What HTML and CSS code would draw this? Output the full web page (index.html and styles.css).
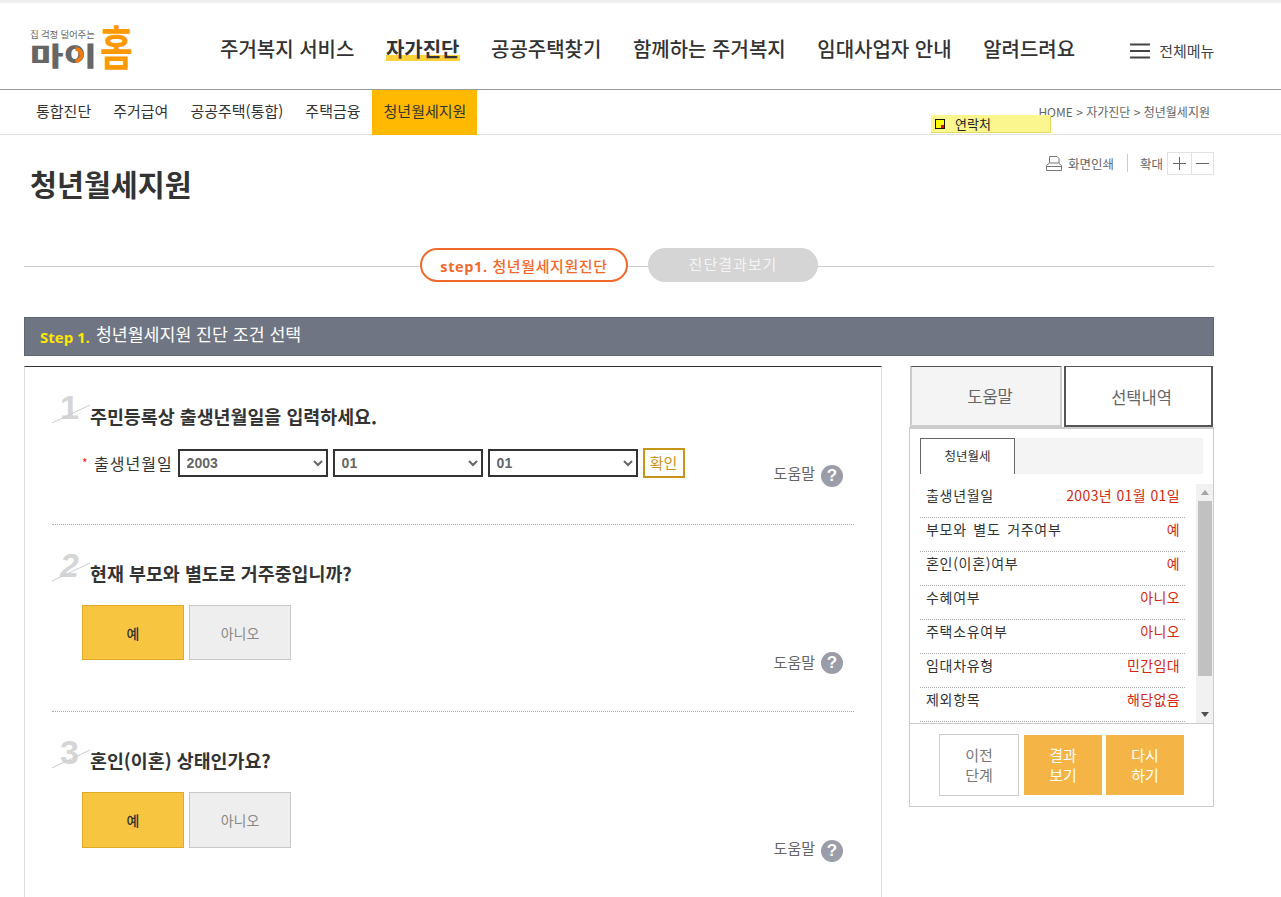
FILE: index.html
```html
<!DOCTYPE html>
<html lang="ko">
<head>
<meta charset="utf-8">
<title>청년월세지원</title>
<link rel="stylesheet" href="styles.css">
</head>
<body>
<div class="top-strip"></div>
<header class="site-header">
  <a class="logo">
    <span class="logo-words">
      <span class="logo-tag">집 걱정 덜어주는</span>
      <span class="logo-mai">마이</span>
      <svg class="logo-ring" width="17" height="18" viewBox="0 0 17 18"><path d="M8.500 3a6 6 0 0 1 0 12" fill="none" stroke="#f07a10" stroke-width="4"/></svg>
    </span>
    <span class="logo-home">홈</span>
  </a>
  <nav class="gnb">
    <a>주거복지 서비스</a>
    <a class="on"><span>자가진단</span></a>
    <a>공공주택찾기</a>
    <a>함께하는 주거복지</a>
    <a>임대사업자 안내</a>
    <a>알려드려요</a>
  </nav>
  <a class="all-menu">
    <svg width="20" height="16" viewBox="0 0 20 16"><path d="M0 1.500h20M0 8h20M0 14.500h20" stroke="#444" stroke-width="2" fill="none"/></svg>
    <span>전체메뉴</span>
  </a>
</header>
<div class="sub-bar">
  <nav class="lnb">
    <a>통합진단</a>
    <a>주거급여</a>
    <a>공공주택(통합)</a>
    <a>주택금융</a>
    <a class="on">청년월세지원</a>
  </nav>
  <div class="crumb">HOME &gt; 자가진단 &gt; 청년월세지원</div>
  <div class="contact-note"><i class="note-icon"></i><span>연락처</span></div>
</div>
<main class="page">
  <div class="title-row">
    <h1>청년월세지원</h1>
    <div class="tools">
      <svg class="print-icon" width="16" height="15" viewBox="0 0 16 15"><path d="M3.500 7V.5h7.500l2 2V7M.5 14.500v-5l3-2.500h9l3 2.500v5zM.5 10.500h15" fill="none" stroke="#777" stroke-width="1"/></svg>
      <span class="print-text">화면인쇄</span>
      <i class="tool-sep"></i>
      <span class="zoom-text">확대</span>
      <span class="zoom-btns">
        <b class="zoom-btn"><svg width="13" height="13" viewBox="0 0 13 13"><path d="M0 6.500h13M6.500 0v13" stroke="#666" fill="none"/></svg></b>
        <b class="zoom-btn"><svg width="13" height="13" viewBox="0 0 13 13"><path d="M0 6.500h13" stroke="#666" fill="none"/></svg></b>
      </span>
    </div>
  </div>
  <div class="steps">
    <div class="pill pill-on"><b>step1.</b> 청년월세지원진단</div>
    <div class="pill pill-off">진단결과보기</div>
  </div>
  <div class="step-bar"><b>Step 1.</b> <span>청년월세지원 진단 조건 선택</span></div>
  <div class="cols">
    <section class="form-panel">
      <div class="q q1">
        <span class="q-num">1</span>
        <svg class="q-slash" width="40" height="20" viewBox="0 0 40 20"><path d="M0 19L38 1" stroke="#ccc" fill="none"/></svg>
        <h2>주민등록상 출생년월일을 입력하세요.</h2>
        <div class="birth-row">
          <span class="req">*</span>
          <label>출생년월일</label>
          <select class="sel"><option>2003</option></select>
          <select class="sel"><option>01</option></select>
          <select class="sel"><option>01</option></select>
          <button class="confirm">확인</button>
        </div>
        <div class="help help1"><span>도움말</span><b>?</b></div>
      </div>
      <div class="q">
        <span class="q-num q-num-slant">2</span>
        <svg class="q-slash" width="40" height="20" viewBox="0 0 40 20"><path d="M0 19L38 1" stroke="#ccc" fill="none"/></svg>
        <h2>현재 부모와 별도로 거주중입니까?</h2>
        <div class="choices"><button class="yes">예</button><button class="no">아니오</button></div>
        <div class="help"><span>도움말</span><b>?</b></div>
      </div>
      <div class="q q-last">
        <span class="q-num">3</span>
        <svg class="q-slash" width="40" height="20" viewBox="0 0 40 20"><path d="M0 19L38 1" stroke="#ccc" fill="none"/></svg>
        <h2>혼인(이혼) 상태인가요?</h2>
        <div class="choices"><button class="yes">예</button><button class="no">아니오</button></div>
        <div class="help"><span>도움말</span><b>?</b></div>
      </div>
    </section>
    <aside class="side">
      <div class="side-tabs">
        <a class="side-tab">도움말</a>
        <a class="side-tab on">선택내역</a>
      </div>
      <div class="side-box">
        <div class="inner-tabs"><a class="inner-tab">청년월세</a></div>
        <div class="list-wrap">
          <dl class="summary">
            <div><dt>출생년월일</dt><dd>2003년 01월 01일</dd></div>
            <div><dt>부모와 별도 거주여부</dt><dd>예</dd></div>
            <div><dt>혼인(이혼)여부</dt><dd>예</dd></div>
            <div><dt>수혜여부</dt><dd>아니오</dd></div>
            <div><dt>주택소유여부</dt><dd>아니오</dd></div>
            <div><dt>임대차유형</dt><dd>민간임대</dd></div>
            <div><dt>제외항목</dt><dd>해당없음</dd></div>
          </dl>
          <div class="scrollbar">
            <i class="arrow-up"></i>
            <i class="thumb"></i>
            <i class="arrow-down"></i>
          </div>
        </div>
        <div class="side-actions">
          <button class="act act-prev">이전<br>단계</button>
          <button class="act">결과<br>보기</button>
          <button class="act">다시<br>하기</button>
        </div>
      </div>
    </aside>
  </div>
</main>
</body>
</html>
```

FILE: styles.css
```css
* { box-sizing: border-box; }
html { overflow: hidden; }
body {
  margin: 0;
  background: #fff;
  color: #333;
  font-family: "Noto Sans CJK KR", "Noto Sans", sans-serif;
}
a { color: inherit; text-decoration: none; }
h1, h2, dl, dd, dt { margin: 0; }

.top-strip { height: 3px; background: #eee; }

.site-header {
  height: 86px;
  display: flex;
  align-items: center;
  padding-left: 30px;
}
.logo { display: flex; width: 190px; height: 50px; align-items: flex-end; margin-top: 4px; }
.logo-words { position: relative; display: flex; flex-direction: column; width: 71px; }
.logo-tag { font-size: 9.500px; line-height: 12px; color: #666; white-space: nowrap; letter-spacing: -.2px; margin-bottom: 3px; }
.logo-mai {
  font-size: 26px;
  line-height: 24px;
  font-weight: 900;
  color: #666;
  margin-bottom: 6px;
  transform: scaleX(1.4);
  transform-origin: left center;
  white-space: nowrap;
}
.logo-ring { position: absolute; left: 37px; top: 18px; }
.logo-home {
  align-self: flex-start;
  margin: -3px 0 0 -1px;
  font-size: 47px;
  line-height: 50px;
  font-weight: 700;
  color: #f90;
  transform: scaleX(.76);
  transform-origin: left center;
}

.gnb { display: flex; gap: 31.500px; margin-top: 6px; }
.gnb a { font-size: 20px; line-height: 28px; font-weight: 500; color: #333; white-space: nowrap; }
.gnb a.on { font-weight: 700; }
.gnb a.on span { display: inline-block; background: linear-gradient(#ffd13a, #ffd13a) 0 20px / 100% 6px no-repeat; }
.all-menu { display: flex; align-items: center; gap: 9px; margin: 9px 0 0 55px; font-size: 15px; color: #444; white-space: nowrap; }

.sub-bar {
  position: relative;
  height: 46px;
  display: flex;
  justify-content: space-between;
  border-top: 1px solid #999;
  border-bottom: 1px solid #e2e2e2;
  padding-left: 25px;
  padding-right: 71px;
}
.lnb { display: flex; height: 45px; }
.lnb a { font-size: 15px; line-height: 42px; padding: 0 11px; color: #333; white-space: nowrap; }
.lnb a.on { background: #ffb900; padding: 0 11px 0 12px; }
.crumb { font-size: 12px; line-height: 44px; color: #666; white-space: nowrap; }
.contact-note {
  position: absolute;
  left: 931px;
  top: 25px;
  width: 120px;
  height: 18px;
  display: flex;
  align-items: center;
  background: #fbf68e;
  border-right: 1px solid #e5da66;
  border-bottom: 1px solid #e5da66;
  padding-left: 4px;
  font-size: 13px;
  color: #222;
}
.note-icon {
  width: 10px;
  height: 10px;
  margin-right: 10px;
  background: linear-gradient(#e00, #e00) 100% 100% / 3px 3px no-repeat #ff0;
  border: 1px solid #111;
}

.page { padding: 0 67px 0 24px; }
.title-row { height: 113px; display: flex; justify-content: space-between; align-items: flex-start; }
.title-row h1 { font-size: 29.300px; line-height: 40px; font-weight: 700; color: #333; margin: 28px 0 0 6px; }
.tools { display: flex; align-items: center; height: 22px; margin-top: 17px; font-size: 12.500px; color: #666; }
.print-icon { margin-right: 6px; }
.tool-sep { width: 1px; height: 18px; background: #ccc; margin: 0 12px 0 13px; }
.zoom-text { margin-right: 4px; }
.zoom-btns { display: flex; border: 1px solid #e2e2e2; }
.zoom-btn { width: 23px; height: 21px; display: flex; align-items: center; justify-content: center; }
.zoom-btn + .zoom-btn { border-left: 1px solid #e2e2e2; width: 22px; }

.steps {
  display: flex;
  justify-content: center;
  gap: 20px;
  height: 34px;
  margin-bottom: 35px;
  background: linear-gradient(#ccc, #ccc) 0 18px / 100% 1px no-repeat;
}
.pill { height: 34px; border-radius: 17px; font-size: 15px; line-height: 31px; text-align: center; white-space: nowrap; }
.pill-on { width: 208px; background: #fff; border: 2px solid #f26a2b; color: #f26a2b; font-weight: 500; letter-spacing: .6px; }
.pill-on b { font-family: "Open Sans", sans-serif; font-weight: 700; font-size: 14.500px; }
.pill-off { width: 170px; background: #d5d5d5; color: #f4f4f4; letter-spacing: 1px; line-height: 32px; }

.step-bar {
  height: 39px;
  display: flex;
  align-items: center;
  gap: 6px;
  padding-left: 15px;
  background: #6f7582;
  border: 1px solid #5e6470;
  margin-bottom: 10px;
  color: #fff;
}
.step-bar b { font-family: "Open Sans", sans-serif; font-size: 15px; font-weight: 700; color: #ffe600; }
.step-bar span { font-size: 17.300px; line-height: 24px; padding-bottom: 5px; }

.cols { display: flex; justify-content: space-between; align-items: flex-start; }
.form-panel {
  width: 858px;
  border-top: 1px solid #333;
  border-left: 1px solid #ddd;
  border-right: 1px solid #ddd;
  padding: 0 27px;
}
.q { position: relative; height: 187px; padding-top: 36px; border-bottom: 1px dotted #aaa; }
.q1 { height: 158px; padding-top: 37px; }
.q-last { border-bottom: 0; }
.q-num {
  position: absolute;
  left: 8px;
  top: 22px;
  font-family: "Liberation Sans", sans-serif;
  font-size: 34px;
  line-height: 36px;
  font-weight: 700;
  color: #d5d5d5;
}
.q-num-slant { font-style: italic; }
.q-slash { position: absolute; left: 0; top: 37px; }
.q h2 { position: relative; font-size: 18.400px; line-height: 24px; font-weight: 700; color: #333; padding-left: 38px; white-space: nowrap; }

.birth-row { display: flex; align-items: center; height: 30px; margin-top: 19px; padding: 1px 0 0 30px; }
.req { width: 12px; color: #e22; font-size: 12px; line-height: 12px; }
.birth-row label { font-size: 16px; letter-spacing: 1px; margin-right: 5px; white-space: nowrap; color: #333; }
.sel {
  width: 150px;
  height: 28px;
  margin-right: 5px;
  border: 2px solid #333;
  border-radius: 0;
  background-color: #fff;
  padding-left: 3px;
  font-family: "Liberation Sans", sans-serif;
  font-size: 14px;
  font-weight: 700;
  color: #666;
}
.confirm {
  width: 42px;
  height: 30px;
  padding: 0;
  background: #fff;
  border: 2px solid #c8941a;
  font-family: inherit;
  font-size: 15px;
  color: #c8941a;
}
.help { display: flex; justify-content: flex-end; align-items: center; gap: 6px; height: 22px; margin: -8px 11px 0 0; font-size: 15px; color: #666; }
.help span { padding-bottom: 3px; }
.help1 { margin-top: -12px; }
.help1 span, .q-last .help span { padding-bottom: 8px; }
.help b {
  width: 22px;
  height: 22px;
  border-radius: 50%;
  background: #9a9ca8;
  color: #fff;
  font-family: "Liberation Sans", sans-serif;
  font-size: 17px;
  line-height: 22px;
  text-align: center;
}
.choices { display: flex; gap: 5px; margin-top: 20px; padding-left: 30px; }
.choices button { width: 102px; height: 55px; padding: 0; font-family: inherit; font-size: 14px; }
.q-last .choices button { height: 56px; }
.yes { background: #f7c53f; border: 1px solid #e0a92a; color: #333; font-weight: 500; }
.no { background: #eee; border: 1px solid #c8c8c8; color: #888; }

.side { width: 305px; }
.side-tabs { display: flex; height: 62px; padding-left: 1px; margin-bottom: -1px; position: relative; }
.side-tab { height: 61px; font-size: 16.500px; line-height: 58px; text-align: center; color: #666; padding-left: 8px; }
.side-tab:first-child { width: 152px; background: #f4f4f4; border: 2px solid #ccc; border-top: 1px solid #555; }
.side-tab.on { width: 149px; margin-left: 2px; background: #fff; border: 2px solid #555; border-top-width: 1px; line-height: 60px; padding-left: 6px; }
.side-box { height: 380px; border: 1px solid #ccc; border-top-width: 2px; padding-top: 9px; }
.inner-tabs { height: 36px; margin: 0 10px; background: #f4f4f4; }
.inner-tab {
  display: block;
  width: 95px;
  height: 36px;
  background: #fff;
  border: 1px solid #666;
  border-bottom: 0;
  font-size: 12.500px;
  line-height: 34px;
  text-align: center;
  color: #333;
}
.list-wrap { display: flex; justify-content: space-between; height: 240px; margin-top: 10px; padding-left: 10px; border-bottom: 1px solid #ccc; }
.summary { width: 265px; height: 238px; }
.summary div { display: flex; justify-content: space-between; align-items: center; height: 34px; padding: 0 5px 11px 6px; border-bottom: 1px dotted #aaa; font-size: 14px; white-space: nowrap; letter-spacing: .7px; word-spacing: 2px; }
.summary dt { color: #333; }
.summary dd { color: #d2290f; letter-spacing: .4px; word-spacing: 0; }
.scrollbar { width: 17px; height: 239px; background: #f1f1f1; display: flex; flex-direction: column; align-items: center; }
.scrollbar .thumb { width: 14px; height: 175px; background: #c1c1c1; margin-top: 6px; margin-bottom: auto; }
.arrow-up, .arrow-down { width: 0; height: 0; border-left: 4px solid transparent; border-right: 4px solid transparent; }
.arrow-up { border-bottom: 5px solid #a3a3a3; margin-top: 6px; }
.arrow-down { border-top: 5px solid #505050; margin-bottom: 6px; }
.side-actions { display: flex; align-items: center; gap: 4px; padding: 10px 0 0 29px; }
.act { width: 78px; height: 60px; padding: 0; border: 0; background: #f5b546; color: #fff; font-family: inherit; font-size: 15px; line-height: 20px; }
.act-prev { width: 80px; height: 62px; margin-right: 1px; background: #fff; border: 1px solid #ccc; color: #777; }
```
